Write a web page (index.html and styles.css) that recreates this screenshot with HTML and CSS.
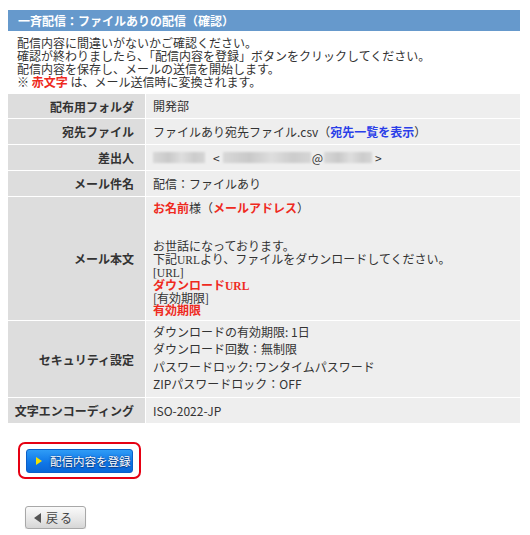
FILE: index.html
```html
<!DOCTYPE html>
<html lang="ja">
<head>
<meta charset="utf-8">
<title>一斉配信：ファイルありの配信（確認）</title>
<link rel="stylesheet" href="styles.css">
</head>
<body>
<div class="page">
  <h1 class="title">一斉配信：ファイルありの配信（確認）</h1>
  <div class="intro">
    <p>配信内容に間違いがないかご確認ください。</p>
    <p>確認が終わりましたら、「配信内容を登録」ボタンをクリックしてください。</p>
    <p>配信内容を保存し、メールの送信を開始します。</p>
    <p>※ <span class="red">赤文字</span> は、メール送信時に変換されます。</p>
  </div>
  <div class="table">
    <div class="row"><div class="th">配布用フォルダ</div><div class="td">開発部</div></div>
    <div class="row"><div class="th">宛先ファイル</div><div class="td">ファイルあり宛先ファイル.csv（<a class="link" href="#">宛先一覧を表示</a>）</div></div>
    <div class="row"><div class="th">差出人</div><div class="td sender"><span class="blur b1"></span><span class="lt">&lt;</span><span class="blur b2"></span><span class="at">@</span><span class="blur b3"></span><span class="gt">&gt;</span></div></div>
    <div class="row"><div class="th">メール件名</div><div class="td">配信：ファイルあり</div></div>
    <div class="row"><div class="th">メール本文</div><div class="td body">
      <div class="ln"><span class="red">お名前</span>様（<span class="red">メールアドレス</span>）</div>
      <div class="ln"></div>
      <div class="ln"></div>
      <div class="ln">お世話になっております。</div>
      <div class="ln">下記<span class="serif">URL</span>より、ファイルをダウンロードしてください。</div>
      <div class="ln"><span class="serif">[URL]</span></div>
      <div class="ln red">ダウンロード<span class="serif">URL</span></div>
      <div class="ln">[有効期限]</div>
      <div class="ln red">有効期限</div>
    </div></div>
    <div class="row"><div class="th">セキュリティ設定</div><div class="td sec">
      <div>ダウンロードの有効期限: 1日</div>
      <div>ダウンロード回数：無制限</div>
      <div>パスワードロック: ワンタイムパスワード</div>
      <div>ZIPパスワードロック：OFF</div>
    </div></div>
    <div class="row"><div class="th">文字エンコーディング</div><div class="td">ISO-2022-JP</div></div>
  </div>
  <div class="actions">
    <div class="focus-frame">
      <button class="btn-primary" type="button"><span class="tri-yellow"></span>配信内容を登録</button>
    </div>
  </div>
  <div class="back-wrap">
    <button class="btn-back" type="button"><span class="tri-left"></span>戻る</button>
  </div>
</div>
</body>
</html>
```

FILE: styles.css
```css
* { box-sizing: border-box; }
body {
  margin: 0;
  background: #ffffff;
  font-family: "Noto Sans CJK JP", "Noto Sans", sans-serif;
  font-size: 12px;
  color: #333333;
}
.page {
  width: 530px;
  padding: 10px 10px 0 8px;
}
.title {
  margin: 0;
  height: 21px;
  line-height: 21px;
  background: #6699cc;
  color: #ffffff;
  font-size: 12px;
  font-weight: bold;
  padding-left: 10px;
}
.intro {
  padding: 5px 9px 6px 9px;
  line-height: 13px;
}
.intro p { margin: 0; }
.red { color: #ee2a1e; font-weight: bold; }
.link { color: #2a3ee8; font-weight: bold; text-decoration: none; }
.serif { font-family: "Liberation Serif", serif; font-size: 11.5px; }
.table {
  display: flex;
  flex-direction: column;
  gap: 1px;
  background: #ffffff;
}
.row {
  display: grid;
  grid-template-columns: 137px 1fr;
  column-gap: 1px;
}
.th {
  background: #dddddd;
  font-weight: bold;
  padding: 0 11px 0 2px;
  display: flex;
  align-items: center;
  justify-content: flex-end;
  white-space: nowrap;
  color: #333333;
}
.td {
  background: #eeeeee;
  padding: 5px 7px;
  line-height: 15px;
  min-height: 25px;
}
.row:first-child .td { min-height: 24px; padding-top: 4px; }
.td.body {
  padding: 5px 7px 3px 7px;
}
.td.body .ln {
  height: 12.8px;
  line-height: 12.8px;
  white-space: nowrap;
}
.td.sec {
  padding: 2px 7px 5px 7px;
  line-height: 17.3px;
}
.sender {
  display: flex;
  align-items: center;
}
.blur {
  display: inline-block;
  height: 11px;
  background: linear-gradient(90deg, #d8d8d8, #c9c9c9 30%, #dedede 55%, #cccccc 80%, #d6d6d6);
  filter: blur(1px);
}
.b1 { width: 52px; margin-right: 8px; }
.b2 { width: 88px; margin-left: 3px; }
.b3 { width: 48px; }
.at { margin: 0 1px; }
.gt { margin-left: 3px; }
.actions {
  padding: 19px 0 0 10px;
}
.focus-frame {
  display: inline-block;
  border: 2px solid #e60012;
  border-radius: 7px;
  padding: 5px 6px 4px 6px;
}
.btn-primary {
  display: flex;
  align-items: center;
  height: 24px;
  width: 107px;
  padding: 0 0 0 9px;
  border: 1px solid #0b5fc8;
  border-radius: 3px;
  background: linear-gradient(#2f9cf6, #1078e8 55%, #0a66d6);
  color: #ffffff;
  font-family: "Noto Sans CJK JP", sans-serif;
  font-size: 11.5px;
  white-space: nowrap;
  text-shadow: 0 1px 1px #0a3a80, 0 0 2px #0a3a80;
  cursor: pointer;
}
.tri-yellow {
  display: inline-block;
  flex: none;
  width: 0;
  height: 0;
  border-left: 6px solid #f4e200;
  border-top: 4px solid transparent;
  border-bottom: 4px solid transparent;
  margin-right: 8px;
}
.back-wrap {
  padding: 27px 0 0 17px;
}
.btn-back {
  display: flex;
  align-items: center;
  height: 23px;
  width: 61px;
  padding: 0 0 0 8px;
  border: 1px solid #a8a8a8;
  border-radius: 3px;
  background: linear-gradient(#fafafa, #e6e6e6 60%, #d6d6d6);
  color: #444444;
  font-family: "Noto Sans CJK JP", sans-serif;
  font-size: 12px;
  letter-spacing: 2px;
  white-space: nowrap;
  box-shadow: 0 1px 1px rgba(0,0,0,0.15);
  cursor: pointer;
}
.tri-left {
  display: inline-block;
  flex: none;
  width: 0;
  height: 0;
  border-right: 7px solid #555555;
  border-top: 5px solid transparent;
  border-bottom: 5px solid transparent;
  margin-right: 5px;
}
```
